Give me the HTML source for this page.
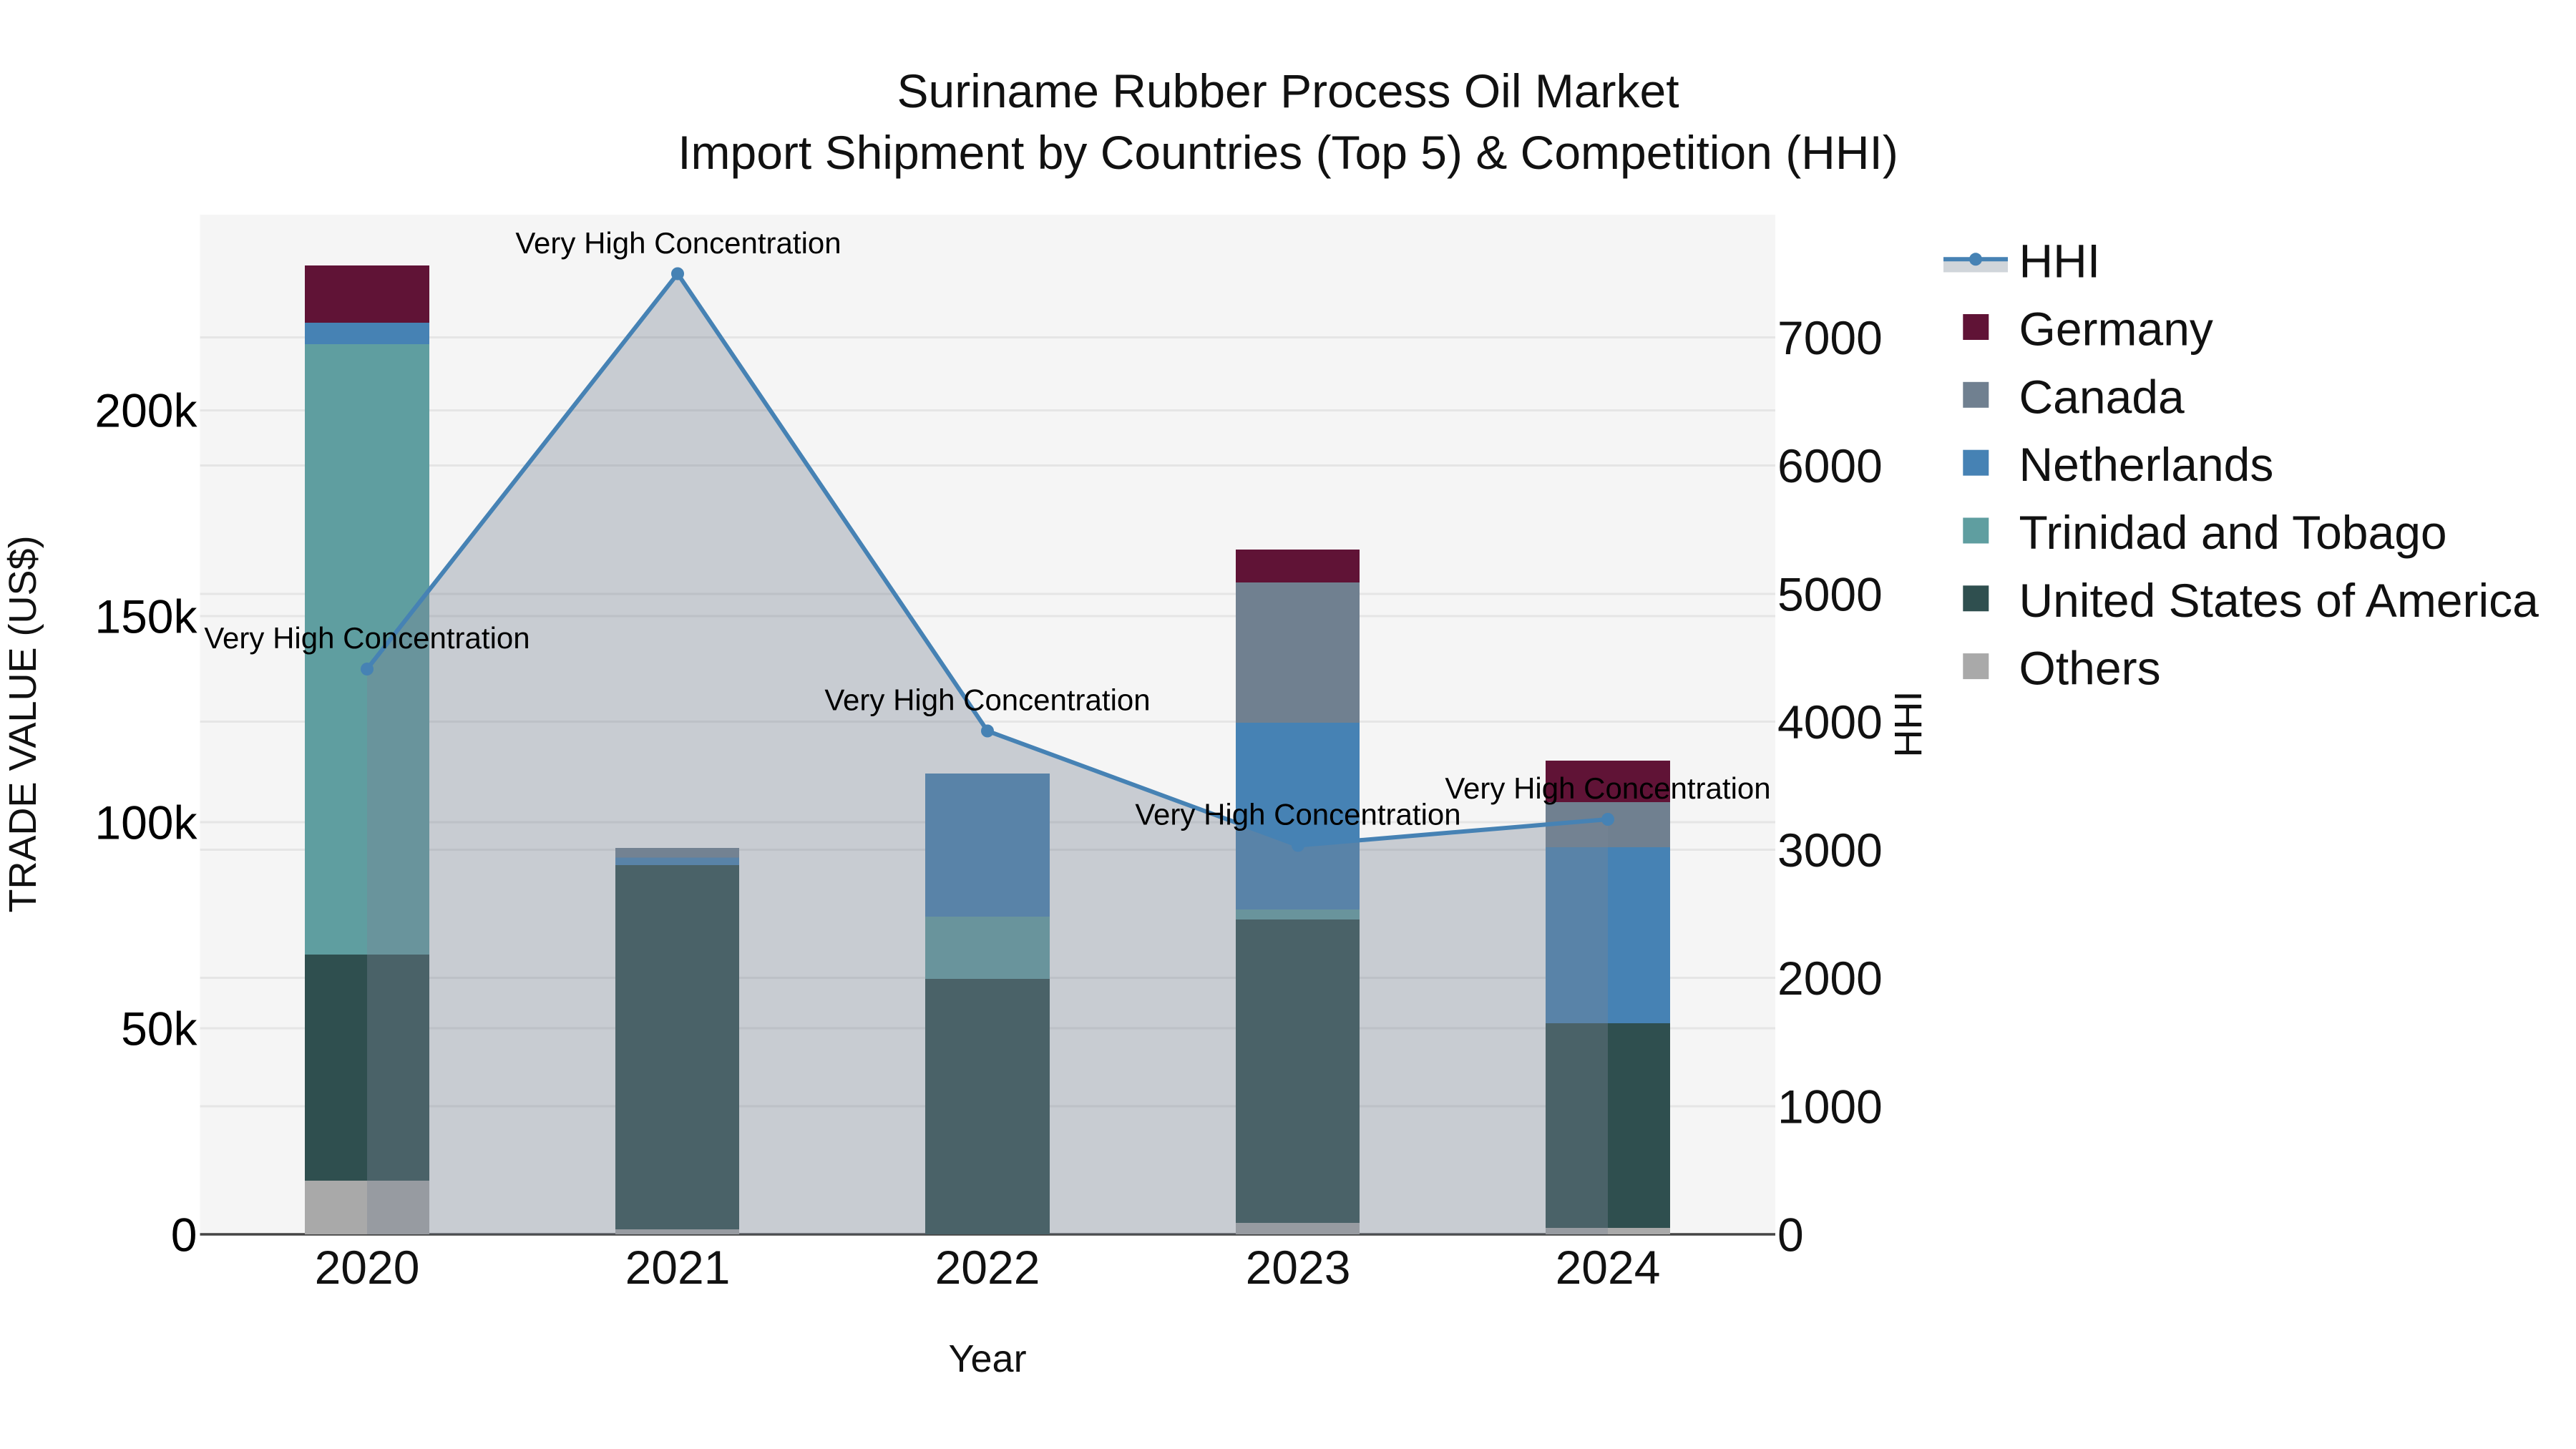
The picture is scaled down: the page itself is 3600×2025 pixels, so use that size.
<!DOCTYPE html>
<html lang="en">
<head>
<meta charset="utf-8">
<title>Suriname Rubber Process Oil Market</title>
<style>
html,body{margin:0;padding:0;background:#fff;width:3600px;height:2025px;overflow:hidden}
svg{display:block}
text{font-family:"Liberation Sans",Arial,sans-serif}
.tick{font-size:66px;fill:#111}
.ann{font-size:42px;fill:#000;text-anchor:middle}
.grid{stroke:#e5e5e5;stroke-width:3}
</style>
</head>
<body>
<svg xmlns="http://www.w3.org/2000/svg" width="3600" height="2025" viewBox="0 0 3600 2025">
<rect width="3600" height="2025" fill="#fff"/>
<rect x="279.5" y="300" width="2201.5" height="1425" fill="#f5f5f5"/>
<!-- grid -->
<g class="grid">
<line x1="279.5" x2="2481" y1="471.5" y2="471.5"/>
<line x1="279.5" x2="2481" y1="573.5" y2="573.5"/>
<line x1="279.5" x2="2481" y1="650.5" y2="650.5"/>
<line x1="279.5" x2="2481" y1="830" y2="830"/>
<line x1="279.5" x2="2481" y1="861" y2="861"/>
<line x1="279.5" x2="2481" y1="1008.5" y2="1008.5"/>
<line x1="279.5" x2="2481" y1="1149" y2="1149"/>
<line x1="279.5" x2="2481" y1="1187.5" y2="1187.5"/>
<line x1="279.5" x2="2481" y1="1366.5" y2="1366.5"/>
<line x1="279.5" x2="2481" y1="1437" y2="1437"/>
<line x1="279.5" x2="2481" y1="1546" y2="1546"/>
</g>
<!-- zero line -->
<line x1="279.5" x2="2481" y1="1725" y2="1725" stroke="#444" stroke-width="3.4"/>
<!-- bars 2020 -->
<rect x="426" y="1650" width="174" height="75" fill="#a9a9a9"/>
<rect x="426" y="1334" width="174" height="316" fill="#2f4f4f"/>
<rect x="426" y="481" width="174" height="853" fill="#5f9ea0"/>
<rect x="426" y="451" width="174" height="30" fill="#4682b4"/>
<rect x="426" y="371" width="174" height="80" fill="#601336"/>
<!-- bars 2021 -->
<rect x="860" y="1718" width="173" height="7" fill="#a9a9a9"/>
<rect x="860" y="1209" width="173" height="509" fill="#2f4f4f"/>
<rect x="860" y="1198.5" width="173" height="10.5" fill="#4682b4"/>
<rect x="860" y="1185" width="173" height="13.5" fill="#708090"/>
<!-- bars 2022 -->
<rect x="1293" y="1368" width="174" height="357" fill="#2f4f4f"/>
<rect x="1293" y="1281" width="174" height="87" fill="#5f9ea0"/>
<rect x="1293" y="1081" width="174" height="200" fill="#4682b4"/>
<!-- bars 2023 -->
<rect x="1727" y="1709" width="173" height="16" fill="#a9a9a9"/>
<rect x="1727" y="1285" width="173" height="424" fill="#2f4f4f"/>
<rect x="1727" y="1271" width="173" height="14" fill="#5f9ea0"/>
<rect x="1727" y="1010" width="173" height="261" fill="#4682b4"/>
<rect x="1727" y="814" width="173" height="196" fill="#708090"/>
<rect x="1727" y="768" width="173" height="46" fill="#601336"/>
<!-- bars 2024 -->
<rect x="2160" y="1716" width="174" height="9" fill="#a9a9a9"/>
<rect x="2160" y="1430" width="174" height="286" fill="#2f4f4f"/>
<rect x="2160" y="1184" width="174" height="246" fill="#4682b4"/>
<rect x="2160" y="1121" width="174" height="63" fill="#708090"/>
<rect x="2160" y="1063" width="174" height="58" fill="#601336"/>
<!-- HHI area -->
<path d="M513,935 L947,382.5 L1380,1021.5 L1814,1181.5 L2247,1145 L2247,1725 L513,1725 Z" fill="rgb(123,134,150)" fill-opacity="0.37"/>
<!-- HHI line -->
<path d="M513,935 L947,382.5 L1380,1021.5 L1814,1181.5 L2247,1145" fill="none" stroke="#4682b4" stroke-width="6" stroke-linejoin="round"/>
<g fill="#4682b4">
<circle cx="513" cy="935" r="9"/>
<circle cx="947" cy="382.5" r="9"/>
<circle cx="1380" cy="1021.5" r="9"/>
<circle cx="1814" cy="1181.5" r="9"/>
<circle cx="2247" cy="1145" r="9"/>
</g>
<!-- annotations -->
<text class="ann" x="513" y="906">Very High Concentration</text>
<text class="ann" x="948" y="354">Very High Concentration</text>
<text class="ann" x="1380" y="992.5">Very High Concentration</text>
<text class="ann" x="1814" y="1152.5">Very High Concentration</text>
<text class="ann" x="2247" y="1116">Very High Concentration</text>
<!-- title -->
<text x="1800" y="150" font-size="66" fill="#111" text-anchor="middle">Suriname Rubber Process Oil Market</text>
<text x="1800" y="236" font-size="66" fill="#111" text-anchor="middle">Import Shipment by Countries (Top 5) &amp; Competition (HHI)</text>
<!-- left ticks -->
<g class="tick" text-anchor="end" style="fill:#000">
<text x="275.5" y="596.5">200k</text>
<text x="275.5" y="884.5">150k</text>
<text x="275.5" y="1172.5">100k</text>
<text x="275.5" y="1460.5">50k</text>
<text x="275.5" y="1748.5">0</text>
</g>
<!-- right ticks -->
<g class="tick">
<text x="2484" y="495">7000</text>
<text x="2484" y="674">6000</text>
<text x="2484" y="853.5">5000</text>
<text x="2484" y="1032">4000</text>
<text x="2484" y="1211">3000</text>
<text x="2484" y="1390">2000</text>
<text x="2484" y="1569.5">1000</text>
<text x="2484" y="1748.5">0</text>
</g>
<!-- x ticks -->
<g class="tick" text-anchor="middle">
<text x="513" y="1794">2020</text>
<text x="947" y="1794">2021</text>
<text x="1380" y="1794">2022</text>
<text x="1814" y="1794">2023</text>
<text x="2247" y="1794">2024</text>
</g>
<!-- axis titles -->
<text x="1380" y="1917" font-size="54" fill="#111" text-anchor="middle">Year</text>
<text transform="translate(50,1012) rotate(-90)" font-size="54" fill="#111" text-anchor="middle">TRADE VALUE (US$)</text>
<text transform="translate(2685,1012) rotate(-90)" font-size="54" fill="#111" text-anchor="middle">HHI</text>
<!-- legend -->
<rect x="2716" y="362" width="90" height="18.5" fill="#708090" fill-opacity="0.33"/>
<line x1="2716" x2="2806" y1="362.3" y2="362.3" stroke="#4682b4" stroke-width="6"/>
<circle cx="2761" cy="362.3" r="9" fill="#4682b4"/>
<rect x="2743.3" y="439" width="36" height="36" fill="#601336"/>
<rect x="2743.3" y="533.8" width="36" height="36" fill="#708090"/>
<rect x="2743.3" y="628.7" width="36" height="36" fill="#4682b4"/>
<rect x="2743.3" y="723.5" width="36" height="36" fill="#5f9ea0"/>
<rect x="2743.3" y="818.3" width="36" height="36" fill="#2f4f4f"/>
<rect x="2743.3" y="913.1" width="36" height="36" fill="#a9a9a9"/>
<g class="tick">
<text x="2821.5" y="387.7">HHI</text>
<text x="2821.5" y="482.5">Germany</text>
<text x="2821.5" y="577.4">Canada</text>
<text x="2821.5" y="672.2">Netherlands</text>
<text x="2821.5" y="767">Trinidad and Tobago</text>
<text x="2821.5" y="861.9">United States of America</text>
<text x="2821.5" y="956.7">Others</text>
</g>
</svg>
</body>
</html>
